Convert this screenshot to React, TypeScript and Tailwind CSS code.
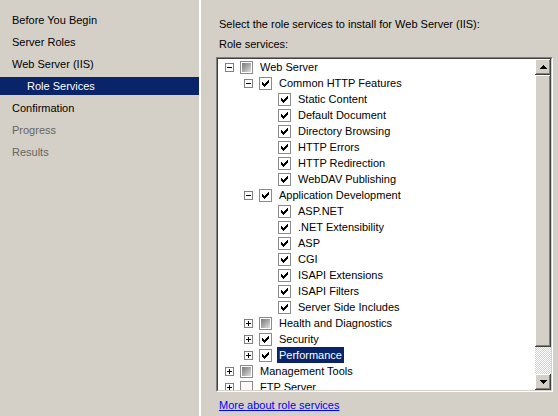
import React from 'react'

type CheckState = 'checked' | 'mixed' | 'empty'

interface TreeRow {
  label: string
  level: number
  expander?: 'minus' | 'plus'
  check: CheckState
  selected?: boolean
}

const steps = [
  { label: 'Before You Begin', indent: false },
  { label: 'Server Roles', indent: false },
  { label: 'Web Server (IIS)', indent: false },
  { label: 'Role Services', indent: true, active: true },
  { label: 'Confirmation', indent: false },
  { label: 'Progress', indent: false, disabled: true },
  { label: 'Results', indent: false, disabled: true },
]

const rows: TreeRow[] = [
  { label: 'Web Server', level: 0, expander: 'minus', check: 'mixed' },
  { label: 'Common HTTP Features', level: 1, expander: 'minus', check: 'checked' },
  { label: 'Static Content', level: 2, check: 'checked' },
  { label: 'Default Document', level: 2, check: 'checked' },
  { label: 'Directory Browsing', level: 2, check: 'checked' },
  { label: 'HTTP Errors', level: 2, check: 'checked' },
  { label: 'HTTP Redirection', level: 2, check: 'checked' },
  { label: 'WebDAV Publishing', level: 2, check: 'checked' },
  { label: 'Application Development', level: 1, expander: 'minus', check: 'checked' },
  { label: 'ASP.NET', level: 2, check: 'checked' },
  { label: '.NET Extensibility', level: 2, check: 'checked' },
  { label: 'ASP', level: 2, check: 'checked' },
  { label: 'CGI', level: 2, check: 'checked' },
  { label: 'ISAPI Extensions', level: 2, check: 'checked' },
  { label: 'ISAPI Filters', level: 2, check: 'checked' },
  { label: 'Server Side Includes', level: 2, check: 'checked' },
  { label: 'Health and Diagnostics', level: 1, expander: 'plus', check: 'mixed' },
  { label: 'Security', level: 1, expander: 'plus', check: 'checked' },
  { label: 'Performance', level: 1, expander: 'plus', check: 'checked', selected: true },
  { label: 'Management Tools', level: 0, expander: 'plus', check: 'mixed' },
  { label: 'FTP Server', level: 0, expander: 'plus', check: 'empty' },
]

function Expander({ kind }: { kind?: 'minus' | 'plus' }) {
  if (!kind) return <span className="w-[9px] h-[9px] shrink-0" />
  return (
    <span className="w-[9px] h-[9px] shrink-0 border border-[#808080] bg-white relative">
      <span className="absolute left-[1px] top-[3px] w-[5px] h-[1px] bg-black" />
      {kind === 'plus' && <span className="absolute left-[3px] top-[1px] w-[1px] h-[5px] bg-black" />}
    </span>
  )
}

function CheckBox({ state }: { state: CheckState }) {
  return (
    <span
      className={`w-[13px] h-[13px] shrink-0 border border-[#8a8a8a] flex items-center justify-center ${
        state === 'empty' ? 'bg-[#fbf7fb]' : 'bg-white'
      }`}
    >
      {state === 'checked' && (
        <svg width="7" height="7" viewBox="0 0 7 7" shapeRendering="crispEdges">
          <path
            d="M6 0h1v1h-1z M5 1h2v1h-2z M0 2h1v1h-1z M4 2h3v1h-3z M0 3h2v1h-2z M3 3h3v1h-3z M0 4h5v1h-5z M1 5h3v1h-3z M2 6h1v1h-1z"
            fill="#000"
          />
        </svg>
      )}
      {state === 'mixed' && (
        <span className="w-[9px] h-[9px] bg-gradient-to-br from-[#7a7a7a] via-[#a9a9a9] to-[#e2e2e2]" />
      )}
    </span>
  )
}

const raised =
  'bg-[#d4d0c8] shadow-[inset_-1px_-1px_#404040,inset_1px_1px_#ffffff,inset_-2px_-2px_#808080,inset_2px_2px_#d4d0c8]'

function ScrollBar() {
  return (
    <div className="w-[16px] shrink-0 flex flex-col">
      <div className={`h-[16px] flex items-center justify-center ${raised}`}>
        <svg width="7" height="4" viewBox="0 0 7 4" shapeRendering="crispEdges">
          <path d="M3 0h1v1h-1z M2 1h3v1h-3z M1 2h5v1h-5z M0 3h7v1h-7z" fill="#000" />
        </svg>
      </div>
      <div className={`h-[272px] ${raised}`} />
      <div className="flex-1 bg-[repeating-conic-gradient(#d4d0c8_0%_25%,#ffffff_0%_50%)] bg-size-[2px_2px]" />
      <div className={`h-[16px] flex items-center justify-center ${raised}`}>
        <svg width="7" height="4" viewBox="0 0 7 4" shapeRendering="crispEdges">
          <path d="M0 0h7v1h-7z M1 1h5v1h-5z M2 2h3v1h-3z M3 3h1v1h-1z" fill="#000" />
        </svg>
      </div>
    </div>
  )
}

export default function App() {
  return (
    <div
      className="w-[558px] h-[416px] flex bg-[#d4d0c8] text-[11px] text-black overflow-hidden"
      style={{ fontFamily: '"Liberation Sans", Arial, sans-serif' }}
    >
      {/* Wizard steps */}
      <div className="w-[199px] shrink-0 pt-[9px] flex flex-col">
        {steps.map((s) => (
          <div key={s.label} className="h-[22px] py-[2px]">
            <div
              className={`h-[18px] leading-[18px] ${s.indent ? 'pl-[27px]' : 'pl-[12px]'} ${
                s.active ? 'bg-[#0a246a] text-white' : s.disabled ? 'text-[#66655e]' : ''
              }`}
            >
              {s.label}
            </div>
          </div>
        ))}
      </div>
      <div className="w-[2px] shrink-0 bg-white" />

      {/* Content */}
      <div className="flex-1 pl-[15px] flex flex-col">
        <div className="pt-[14px] leading-[20px] pl-[3px]">
          <p>Select the role services to install for Web Server (IIS):</p>
          <p>Role services:</p>
        </div>
        <div className="mt-[3px] w-[337px] h-[335px] flex border border-t-[#808080] border-l-[#808080] border-b-white border-r-white">
          <div className="flex-1 flex border border-t-[#404040] border-l-[#404040] border-b-[#d4d0c8] border-r-[#d4d0c8]">
            <div className="flex-1 bg-white overflow-hidden">
              {rows.map((r) => (
                <div
                  key={r.label}
                  className="h-[16px] leading-[16px] flex items-center"
                  style={{ paddingLeft: 7 + 19 * r.level }}
                >
                  <Expander kind={r.expander} />
                  <span className="w-[6px] shrink-0" />
                  <CheckBox state={r.check} />
                  <span
                    className={`ml-[5px] px-[2px] whitespace-nowrap ${
                      r.selected ? 'bg-[#0a246a] text-white' : ''
                    }`}
                  >
                    {r.label}
                  </span>
                </div>
              ))}
            </div>
            <ScrollBar />
          </div>
        </div>
        <a href="#" className="mt-[5px] pl-[3px] leading-[16px] text-[#0000ff] underline w-fit">
          More about role services
        </a>
      </div>
    </div>
  )
}
